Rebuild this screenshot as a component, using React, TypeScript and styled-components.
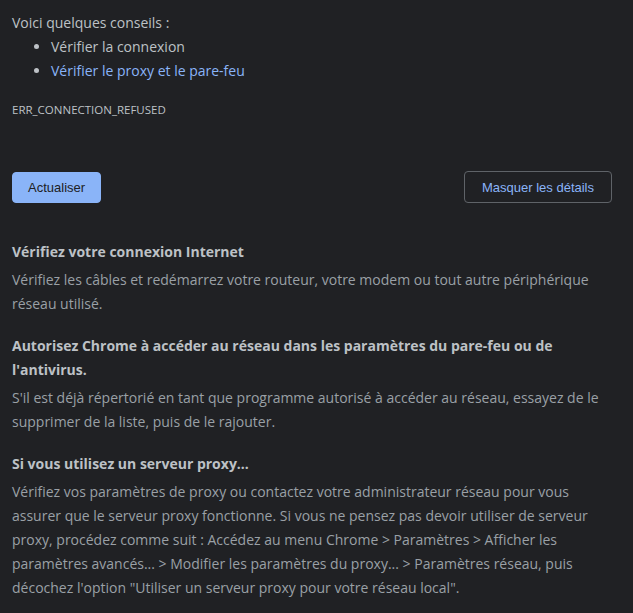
import React from "react";
import styled, { createGlobalStyle } from "styled-components";

const Global = createGlobalStyle`
  html, body { margin: 0; padding: 0; background: #202124; }
  body { font-family: "Open Sans", "Noto Sans", sans-serif; }
`;

const Page = styled.div`
  width: 600px;
  padding: 11px 12px 0 12px;
  color: #bdc1c6;
  font-size: 14px;
  line-height: 24px;
`;

const Lead = styled.p`
  margin: 0;
`;

const Tips = styled.ul`
  margin: 0;
  padding-left: 39px;
`;

const Tip = styled.li<{ $link?: boolean }>`
  color: ${(p) => (p.$link ? "#8ab4f8" : "#bdc1c6")};
  &::marker { color: #bdc1c6; }
`;

const ErrorCode = styled.div`
  margin-top: 19px;
  font-size: 11.5px;
  line-height: 16px;
  color: #bdc1c6;
`;

const Actions = styled.div`
  display: flex;
  justify-content: space-between;
  align-items: center;
  margin-top: 53px;
`;

const Button = styled.button<{ $primary?: boolean }>`
  font-family: "Liberation Sans", Arial, sans-serif;
  font-size: 13px;
  height: ${(p) => (p.$primary ? "31px" : "32px")};
  padding: 0 ${(p) => (p.$primary ? "15px" : "17px")};
  border-radius: 4px;
  cursor: pointer;
  border: 1px solid ${(p) => (p.$primary ? "#8ab4f8" : "#5f6368")};
  background: ${(p) => (p.$primary ? "#8ab4f8" : "transparent")};
  color: ${(p) => (p.$primary ? "#202124" : "#8ab4f8")};
`;

const Details = styled.div`
  margin-top: 37px;
`;

const Section = styled.section`
  margin-bottom: 18px;
`;

const Heading = styled.h4`
  margin: 0;
  font-size: 14px;
  font-weight: 700;
  line-height: 24px;
  color: #bdc1c6;
`;

const Body = styled.p`
  margin: 4px 0 0 0;
  color: #9aa0a6;
`;

export default function App() {
  return (
    <>
      <Global />
      <Page>
        <Lead>Voici quelques conseils :</Lead>
        <Tips>
          <Tip>Vérifier la connexion</Tip>
          <Tip $link>Vérifier le proxy et le pare-feu</Tip>
        </Tips>
        <ErrorCode>ERR_CONNECTION_REFUSED</ErrorCode>
        <Actions>
          <Button $primary>Actualiser</Button>
          <Button>Masquer les détails</Button>
        </Actions>
        <Details>
          <Section>
            <Heading>Vérifiez votre connexion Internet</Heading>
            <Body>
              Vérifiez les câbles et redémarrez votre routeur, votre modem ou tout autre périphérique réseau utilisé.
            </Body>
          </Section>
          <Section>
            <Heading>Autorisez Chrome à accéder au réseau dans les paramètres du pare-feu ou de l'antivirus.</Heading>
            <Body>
              S'il est déjà répertorié en tant que programme autorisé à accéder au réseau, essayez de le supprimer de la liste, puis de le rajouter.
            </Body>
          </Section>
          <Section>
            <Heading>Si vous utilisez un serveur proxy...</Heading>
            <Body>
              Vérifiez vos paramètres de proxy ou contactez votre administrateur réseau pour vous assurer que le serveur proxy fonctionne. Si vous ne pensez pas devoir utiliser de serveur proxy, procédez comme suit : Accédez au menu Chrome &gt; Paramètres &gt; Afficher les paramètres avancés... &gt; Modifier les paramètres du proxy... &gt; Paramètres réseau, puis décochez l'option "Utiliser un serveur proxy pour votre réseau local".
            </Body>
          </Section>
        </Details>
      </Page>
    </>
  );
}
